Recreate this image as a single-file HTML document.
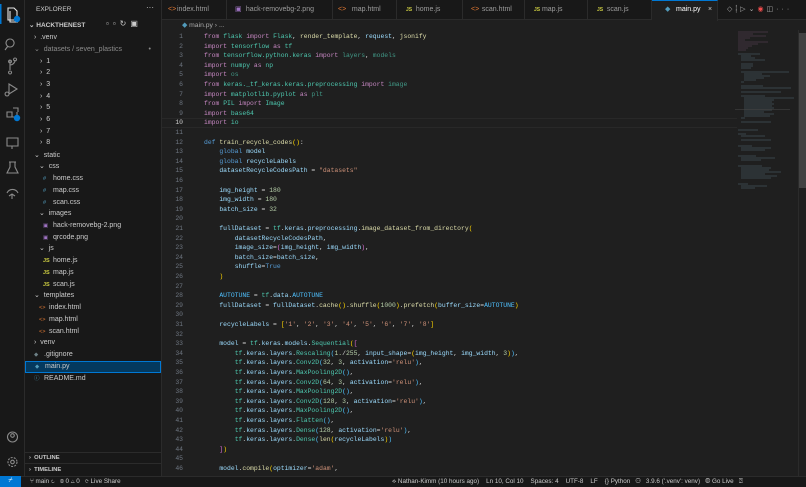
<!DOCTYPE html>
<html><head><meta charset="utf-8"><style>
*{margin:0;padding:0;box-sizing:border-box}
body{width:806px;height:487px;background:#1f1f1f;font-family:"Liberation Sans",sans-serif;overflow:hidden;position:relative;color:#ccc}
.abs{position:absolute}
#act{left:0;top:0;width:25px;height:476px;background:#181818;border-right:1px solid #2b2b2b}
#side{left:25px;top:0;width:137px;height:476px;background:#181818;border-right:1px solid #2b2b2b}
.row{position:absolute;left:0;width:136px;height:11.7px;font-size:7px;line-height:11.7px;color:#cccccc;white-space:nowrap}
.ic{display:inline-block;font-size:5.5px;width:10px}
#tabs{left:162px;top:0;width:644px;height:20px;background:#181818;border-bottom:1px solid #2b2b2b}
.tab{position:absolute;top:0;height:20px;font-size:7px;line-height:20px;color:#9d9d9d;border-right:1px solid #2b2b2b;padding-left:15px;white-space:nowrap}
#code{left:162px;top:32px;width:575px;font-family:"Liberation Mono",monospace;font-size:6.4px;line-height:9.6px;white-space:pre}
.ln{position:absolute;left:0;width:21px;text-align:right;color:#6e7681}
.tx{position:absolute;left:42px;color:#d4d4d4}
.k{color:#c586c0}.d{color:#569cd6}.f{color:#dcdcaa}.v{color:#9cdcfe}.m{color:#4ec9b0}.s{color:#ce9178}.n{color:#b5cea8}.y{color:#ffd700}.p{color:#da70d6}.c{color:#4fc1ff}
#status{left:0;top:476px;width:806px;height:11px;background:#181818;border-top:1px solid #2b2b2b;font-size:6.3px;line-height:10px;color:#ccc}
</style></head><body>
<div id="act" class="abs">
<svg width="25" height="476" viewBox="0 0 25 476" fill="none" stroke="#d7d7d7" stroke-width="1.1">
<rect x="0" y="4" width="1.5" height="20" fill="#0078d4" stroke="none"/>
<path d="M8 8h6l3 3v9h-9z M10 11v11h8" stroke="#e6e6e6"/>
<circle cx="17" cy="19" r="3.2" fill="#0078d4" stroke="none"/>
<path d="M10 39a4 4 0 1 0 .1 0 M8 46l-3 4" stroke="#8b8b8b"/>
<path d="M10 60v10 M10 65a5 5 0 0 0 5-5 M10 60a1.5 1.5 0 1 0 .1 0 M15 58a1.5 1.5 0 1 0 .1 0 M10 71a1.5 1.5 0 1 0 .1 0" stroke="#8b8b8b"/>
<path d="M9 84l8 5-8 5z M7 92a2 2 0 1 0 .1 0" stroke="#8b8b8b"/>
<path d="M7 112h5v5H7z M12 117h5v-5 M13 108h5v4" stroke="#8b8b8b"/>
<circle cx="17" cy="118" r="3.2" fill="#0078d4" stroke="none"/>
<path d="M7 138h11v8H7z M12 146v3" stroke="#8b8b8b"/>
<path d="M10 162v5l-3 6h11l-3-6v-5 M9 162h7" stroke="#8b8b8b"/>
<path d="M7 193a6 6 0 0 1 11 0 M9 196l3-2 3 2 M12 194v5" stroke="#8b8b8b"/>
<circle cx="12.5" cy="437" r="5" stroke="#8b8b8b"/><circle cx="12.5" cy="435.5" r="1.8" stroke="#8b8b8b"/>
<circle cx="12.5" cy="462" r="4.5" stroke="#8b8b8b" stroke-dasharray="2 1.2"/><circle cx="12.5" cy="462" r="1.8" stroke="#8b8b8b"/>
</svg>
</div>
<div id="side" class="abs">
<div class="abs" style="left:11px;top:6px;font-size:6.5px;color:#ccc">EXPLORER</div>
<div class="abs" style="left:121px;top:3px;font-size:8px;color:#ccc">···</div>
<div class="abs" style="left:4px;top:21px;font-size:6.5px;font-weight:bold;color:#ccc">⌄ HACKTHENEST</div>
<div class="abs" style="left:81px;top:19px;font-size:8px;color:#ccc;letter-spacing:4px">▫▫↻▣</div>
<div class="row" style="top:32px;padding-left:9px">›&nbsp; .venv</div>
<div class="row" style="top:44px;padding-left:9px;color:#8b8b8b">⌄&nbsp; datasets / seven_plastics <span style="float:right;margin-right:10px">•</span></div>
<div class="row" style="top:55.5px;padding-left:15px">›&nbsp; 1</div>
<div class="row" style="top:67.2px;padding-left:15px">›&nbsp; 2</div>
<div class="row" style="top:78.9px;padding-left:15px">›&nbsp; 3</div>
<div class="row" style="top:90.6px;padding-left:15px">›&nbsp; 4</div>
<div class="row" style="top:102.3px;padding-left:15px">›&nbsp; 5</div>
<div class="row" style="top:114px;padding-left:15px">›&nbsp; 6</div>
<div class="row" style="top:125.7px;padding-left:15px">›&nbsp; 7</div>
<div class="row" style="top:137.4px;padding-left:15px">›&nbsp; 8</div>
<div class="row" style="top:149.5px;padding-left:9px">⌄&nbsp; static</div>
<div class="row" style="top:161px;padding-left:14px">⌄&nbsp; css</div>
<div class="row" style="top:173px;padding-left:18px"><span class="ic" style="color:#519aba">#</span>home.css</div>
<div class="row" style="top:185px;padding-left:18px"><span class="ic" style="color:#519aba">#</span>map.css</div>
<div class="row" style="top:197px;padding-left:18px"><span class="ic" style="color:#519aba">#</span>scan.css</div>
<div class="row" style="top:208px;padding-left:14px">⌄&nbsp; images</div>
<div class="row" style="top:220px;padding-left:18px"><span class="ic" style="color:#a074c4">▣</span>hack-removebg-2.png</div>
<div class="row" style="top:232px;padding-left:18px"><span class="ic" style="color:#a074c4">▣</span>qrcode.png</div>
<div class="row" style="top:243px;padding-left:14px">⌄&nbsp; js</div>
<div class="row" style="top:255px;padding-left:18px"><span class="ic" style="color:#cbcb41;font-weight:bold">JS</span>home.js</div>
<div class="row" style="top:267px;padding-left:18px"><span class="ic" style="color:#cbcb41;font-weight:bold">JS</span>map.js</div>
<div class="row" style="top:279px;padding-left:18px"><span class="ic" style="color:#cbcb41;font-weight:bold">JS</span>scan.js</div>
<div class="row" style="top:290px;padding-left:9px">⌄&nbsp; templates</div>
<div class="row" style="top:302px;padding-left:14px"><span class="ic" style="color:#e37933">&lt;&gt;</span>index.html</div>
<div class="row" style="top:314px;padding-left:14px"><span class="ic" style="color:#e37933">&lt;&gt;</span>map.html</div>
<div class="row" style="top:326px;padding-left:14px"><span class="ic" style="color:#e37933">&lt;&gt;</span>scan.html</div>
<div class="row" style="top:337px;padding-left:9px">›&nbsp; venv</div>
<div class="row" style="top:349px;padding-left:9px"><span class="ic" style="color:#6d8086">◆</span>.gitignore</div>
<div class="row" style="top:361px;padding-left:9px;background:#04395e;border:1px solid #0078d4;line-height:9.7px"><span class="ic" style="color:#519aba">◆</span>main.py</div>
<div class="row" style="top:372.5px;padding-left:9px"><span class="ic" style="color:#519aba">ⓘ</span>README.md</div>
<div class="abs" style="left:0;top:452px;width:136px;border-top:1px solid #2b2b2b;font-size:5.8px;font-weight:bold;line-height:11px;padding-left:4px">›&nbsp; OUTLINE</div>
<div class="abs" style="left:0;top:463px;width:136px;border-top:1px solid #2b2b2b;font-size:5.8px;font-weight:bold;line-height:12px;padding-left:4px">›&nbsp; TIMELINE</div>
</div>
<div id="tabs" class="abs">
<div class="tab" style="left:0;width:65px"><span style="color:#e37933;position:absolute;left:6px">&lt;&gt;</span>index.html</div>
<div class="tab" style="left:65px;width:106px"><span style="color:#a074c4;position:absolute;left:8px">▣</span>&nbsp;&nbsp;hack-removebg-2.png</div>
<div class="tab" style="left:171px;width:64px"><span style="color:#e37933;position:absolute;left:5px">&lt;&gt;</span>&nbsp;&nbsp;map.html</div>
<div class="tab" style="left:235px;width:66px"><span style="color:#cbcb41;font-weight:bold;font-size:5px;position:absolute;left:9px">JS</span>&nbsp;&nbsp;home.js</div>
<div class="tab" style="left:301px;width:62px"><span style="color:#e37933;position:absolute;left:8px">&lt;&gt;</span>&nbsp;&nbsp;scan.html</div>
<div class="tab" style="left:363px;width:63px"><span style="color:#cbcb41;font-weight:bold;font-size:5px;position:absolute;left:9px">JS</span>&nbsp;map.js</div>
<div class="tab" style="left:426px;width:64px"><span style="color:#cbcb41;font-weight:bold;font-size:5px;position:absolute;left:9px">JS</span>&nbsp;&nbsp;scan.js</div>
<div class="tab" style="left:490px;width:66px;background:#1f1f1f;color:#fff;border-top:1px solid #0078d4;height:21px;padding-left:24px;line-height:18px"><span style="color:#519aba;position:absolute;left:13px">◆</span>main.py<span style="position:absolute;left:56px;color:#ccc">×</span></div>
<div class="abs" style="left:565px;top:5px;font-size:7px;color:#aaa;letter-spacing:3px">◇⸽▷⌄<span style="color:#f14c4c">◉</span>◫···</div>
</div>
<div class="abs" style="left:182px;top:21px;font-size:6.8px;color:#aaa"><span style="color:#519aba">◆</span> main.py › ...</div>
<div class="abs" style="left:162px;top:118px;width:575px;height:10px;border-top:1px solid #282828;border-bottom:1px solid #282828"></div>
<div id="code" class="abs">
<div class="ln" style="top:0">1</div><div class="tx" style="top:0"><span class="k">from</span> <span class="m">flask</span> <span class="k">import</span> <span class="m">Flask</span>, <span class="f">render_template</span>, <span class="v">request</span>, <span class="f">jsonify</span></div>
<div class="ln" style="top:9.6px">2</div><div class="tx" style="top:9.6px"><span class="k">import</span> <span class="m">tensorflow</span> <span class="k">as</span> <span class="m">tf</span></div>
<div class="ln" style="top:19.2px">3</div><div class="tx" style="top:19.2px"><span class="k">from</span> <span class="m">tensorflow.python.keras</span> <span class="k">import</span> <span class="m" style="opacity:.7">layers</span>, <span class="m" style="opacity:.7">models</span></div>
<div class="ln" style="top:28.8px">4</div><div class="tx" style="top:28.8px"><span class="k">import</span> <span class="m">numpy</span> <span class="k">as</span> <span class="m">np</span></div>
<div class="ln" style="top:38.4px">5</div><div class="tx" style="top:38.4px"><span class="k">import</span> <span class="m" style="opacity:.7">os</span></div>
<div class="ln" style="top:48px">6</div><div class="tx" style="top:48px"><span class="k">from</span> <span class="m">keras._tf_keras.keras.preprocessing</span> <span class="k">import</span> <span class="m" style="opacity:.7">image</span></div>
<div class="ln" style="top:57.6px">7</div><div class="tx" style="top:57.6px"><span class="k">import</span> <span class="m">matplotlib.pyplot</span> <span class="k">as</span> <span class="m" style="opacity:.7">plt</span></div>
<div class="ln" style="top:67.2px">8</div><div class="tx" style="top:67.2px"><span class="k">from</span> <span class="m">PIL</span> <span class="k">import</span> <span class="m">Image</span></div>
<div class="ln" style="top:76.8px">9</div><div class="tx" style="top:76.8px"><span class="k">import</span> <span class="m">base64</span></div>
<div class="ln" style="top:86.4px;color:#ccc">10</div><div class="tx" style="top:86.4px"><span class="k">import</span> <span class="m">io</span></div>
<div class="ln" style="top:96px">11</div>
<div class="ln" style="top:105.6px">12</div><div class="tx" style="top:105.6px"><span class="d">def</span> <span class="f">train_recycle_codes</span><span class="y">()</span>:</div>
<div class="ln" style="top:115.2px">13</div><div class="tx" style="top:115.2px">    <span class="d">global</span> <span class="v">model</span></div>
<div class="ln" style="top:124.8px">14</div><div class="tx" style="top:124.8px">    <span class="d">global</span> <span class="v">recycleLabels</span></div>
<div class="ln" style="top:134.4px">15</div><div class="tx" style="top:134.4px">    <span class="v">datasetRecycleCodesPath</span> = <span class="s">"datasets"</span></div>
<div class="ln" style="top:144px">16</div>
<div class="ln" style="top:153.6px">17</div><div class="tx" style="top:153.6px">    <span class="v">img_height</span> = <span class="n">180</span></div>
<div class="ln" style="top:163.2px">18</div><div class="tx" style="top:163.2px">    <span class="v">img_width</span> = <span class="n">180</span></div>
<div class="ln" style="top:172.8px">19</div><div class="tx" style="top:172.8px">    <span class="v">batch_size</span> = <span class="n">32</span></div>
<div class="ln" style="top:182.4px">20</div>
<div class="ln" style="top:192px">21</div><div class="tx" style="top:192px">    <span class="v">fullDataset</span> = <span class="m">tf</span>.<span class="v">keras</span>.<span class="v">preprocessing</span>.<span class="f">image_dataset_from_directory</span><span class="y">(</span></div>
<div class="ln" style="top:201.6px">22</div><div class="tx" style="top:201.6px">        <span class="v">datasetRecycleCodesPath</span>,</div>
<div class="ln" style="top:211.2px">23</div><div class="tx" style="top:211.2px">        <span class="v">image_size</span>=<span class="p">(</span><span class="v">img_height</span>, <span class="v">img_width</span><span class="p">)</span>,</div>
<div class="ln" style="top:220.8px">24</div><div class="tx" style="top:220.8px">        <span class="v">batch_size</span>=<span class="v">batch_size</span>,</div>
<div class="ln" style="top:230.4px">25</div><div class="tx" style="top:230.4px">        <span class="v">shuffle</span>=<span class="d">True</span></div>
<div class="ln" style="top:240px">26</div><div class="tx" style="top:240px">    <span class="y">)</span></div>
<div class="ln" style="top:249.6px">27</div>
<div class="ln" style="top:259.2px">28</div><div class="tx" style="top:259.2px">    <span class="c">AUTOTUNE</span> = <span class="m">tf</span>.<span class="v">data</span>.<span class="c">AUTOTUNE</span></div>
<div class="ln" style="top:268.8px">29</div><div class="tx" style="top:268.8px">    <span class="v">fullDataset</span> = <span class="v">fullDataset</span>.<span class="f">cache</span><span class="y">()</span>.<span class="f">shuffle</span><span class="y">(</span><span class="n">1000</span><span class="y">)</span>.<span class="f">prefetch</span><span class="y">(</span><span class="v">buffer_size</span>=<span class="c">AUTOTUNE</span><span class="y">)</span></div>
<div class="ln" style="top:278.4px">30</div>
<div class="ln" style="top:288px">31</div><div class="tx" style="top:288px">    <span class="v">recycleLabels</span> = <span class="y">[</span><span class="s">'1'</span>, <span class="s">'2'</span>, <span class="s">'3'</span>, <span class="s">'4'</span>, <span class="s">'5'</span>, <span class="s">'6'</span>, <span class="s">'7'</span>, <span class="s">'8'</span><span class="y">]</span></div>
<div class="ln" style="top:297.6px">32</div>
<div class="ln" style="top:307.2px">33</div><div class="tx" style="top:307.2px">    <span class="v">model</span> = <span class="m">tf</span>.<span class="v">keras</span>.<span class="v">models</span>.<span class="m">Sequential</span><span class="y">(</span><span class="p">[</span></div>
<div class="ln" style="top:316.8px">34</div><div class="tx" style="top:316.8px">        <span class="m">tf</span>.<span class="v">keras</span>.<span class="v">layers</span>.<span class="m">Rescaling</span><span class="c">(</span><span class="n">1.</span>/<span class="n">255</span>, <span class="v">input_shape</span>=<span class="y">(</span><span class="v">img_height</span>, <span class="v">img_width</span>, <span class="n">3</span><span class="y">)</span><span class="c">)</span>,</div>
<div class="ln" style="top:326.4px">35</div><div class="tx" style="top:326.4px">        <span class="m">tf</span>.<span class="v">keras</span>.<span class="v">layers</span>.<span class="m">Conv2D</span><span class="c">(</span><span class="n">32</span>, <span class="n">3</span>, <span class="v">activation</span>=<span class="s">'relu'</span><span class="c">)</span>,</div>
<div class="ln" style="top:336px">36</div><div class="tx" style="top:336px">        <span class="m">tf</span>.<span class="v">keras</span>.<span class="v">layers</span>.<span class="m">MaxPooling2D</span><span class="c">()</span>,</div>
<div class="ln" style="top:345.6px">37</div><div class="tx" style="top:345.6px">        <span class="m">tf</span>.<span class="v">keras</span>.<span class="v">layers</span>.<span class="m">Conv2D</span><span class="c">(</span><span class="n">64</span>, <span class="n">3</span>, <span class="v">activation</span>=<span class="s">'relu'</span><span class="c">)</span>,</div>
<div class="ln" style="top:355.2px">38</div><div class="tx" style="top:355.2px">        <span class="m">tf</span>.<span class="v">keras</span>.<span class="v">layers</span>.<span class="m">MaxPooling2D</span><span class="c">()</span>,</div>
<div class="ln" style="top:364.8px">39</div><div class="tx" style="top:364.8px">        <span class="m">tf</span>.<span class="v">keras</span>.<span class="v">layers</span>.<span class="m">Conv2D</span><span class="c">(</span><span class="n">128</span>, <span class="n">3</span>, <span class="v">activation</span>=<span class="s">'relu'</span><span class="c">)</span>,</div>
<div class="ln" style="top:374.4px">40</div><div class="tx" style="top:374.4px">        <span class="m">tf</span>.<span class="v">keras</span>.<span class="v">layers</span>.<span class="m">MaxPooling2D</span><span class="c">()</span>,</div>
<div class="ln" style="top:384px">41</div><div class="tx" style="top:384px">        <span class="m">tf</span>.<span class="v">keras</span>.<span class="v">layers</span>.<span class="m">Flatten</span><span class="c">()</span>,</div>
<div class="ln" style="top:393.6px">42</div><div class="tx" style="top:393.6px">        <span class="m">tf</span>.<span class="v">keras</span>.<span class="v">layers</span>.<span class="m">Dense</span><span class="c">(</span><span class="n">128</span>, <span class="v">activation</span>=<span class="s">'relu'</span><span class="c">)</span>,</div>
<div class="ln" style="top:403.2px">43</div><div class="tx" style="top:403.2px">        <span class="m">tf</span>.<span class="v">keras</span>.<span class="v">layers</span>.<span class="m">Dense</span><span class="c">(</span><span class="f">len</span><span class="y">(</span><span class="v">recycleLabels</span><span class="y">)</span><span class="c">)</span></div>
<div class="ln" style="top:412.8px">44</div><div class="tx" style="top:412.8px">    <span class="p">]</span><span class="y">)</span></div>
<div class="ln" style="top:422.4px">45</div>
<div class="ln" style="top:432px">46</div><div class="tx" style="top:432px">    <span class="v">model</span>.<span class="f">compile</span><span class="y">(</span><span class="v">optimizer</span>=<span class="s">'adam'</span>,</div>
</div>
<svg class="abs" style="left:735px;top:30px" width="71" height="446">
<g stroke-width="0.6" opacity=".4">
<path d="M3 2h30M3 4h15M3 6h28M3 8h12M3 10h7M3 12h30M3 14h20M3 16h14M3 18h10M3 20h8" stroke="#c586c0"/>
<path d="M3 24h22M6 26h10M6 28h14M6 30h24M6 34h12M6 36h12M6 38h10M6 42h48M9 44h18M9 46h26M9 48h20M9 50h12M6 52h3M6 56h22M6 58h50M6 62h40M6 66h24M9 68h50M9 70h30M9 72h28M9 74h30M9 76h28M9 78h30M9 80h28M9 82h20M9 84h30M9 86h26M6 88h4M6 92h30" stroke="#9cdcfe"/>
<path d="M3 100h20M3 104h8M6 106h24M6 110h30M3 116h14M6 118h30M6 120h24M3 126h18M6 128h34M6 130h20M3 136h24M6 138h30M6 140h28M6 142h40M6 144h24M6 146h36M6 148h30M3 154h10M6 156h26M6 158h14" stroke="#9cdcfe"/>
</g>
<rect x="0" y="79" width="55" height="0.8" fill="#3a3a3a"/>
<rect x="63" y="3" width="8" height="155" fill="#424242"/>
</svg>
<div class="abs" style="left:798px;top:30px;width:1px;height:446px;background:#2b2b2b"></div>
<div id="status" class="abs">
<div class="abs" style="left:0;top:-1px;width:21px;height:11px;background:#0078d4;color:#fff;text-align:center;font-size:7px">⌿</div>
<div class="abs" style="left:30px;top:0">⑂ main ↻&nbsp;&nbsp; ⊗ 0 △ 0&nbsp;&nbsp; ⟳ Live Share</div>
<div class="abs" style="left:392px;top:0;white-space:nowrap">⟡ Nathan-Kimm (10 hours ago)&nbsp;&nbsp;&nbsp; Ln 10, Col 10&nbsp;&nbsp;&nbsp; Spaces: 4&nbsp;&nbsp;&nbsp; UTF-8&nbsp;&nbsp;&nbsp; LF&nbsp;&nbsp;&nbsp; {} Python&nbsp;&nbsp; ⚇&nbsp;&nbsp; 3.9.6 ('.venv': venv)&nbsp;&nbsp; ◍ Go Live&nbsp;&nbsp; ⍰</div>
</div>
</body></html>
